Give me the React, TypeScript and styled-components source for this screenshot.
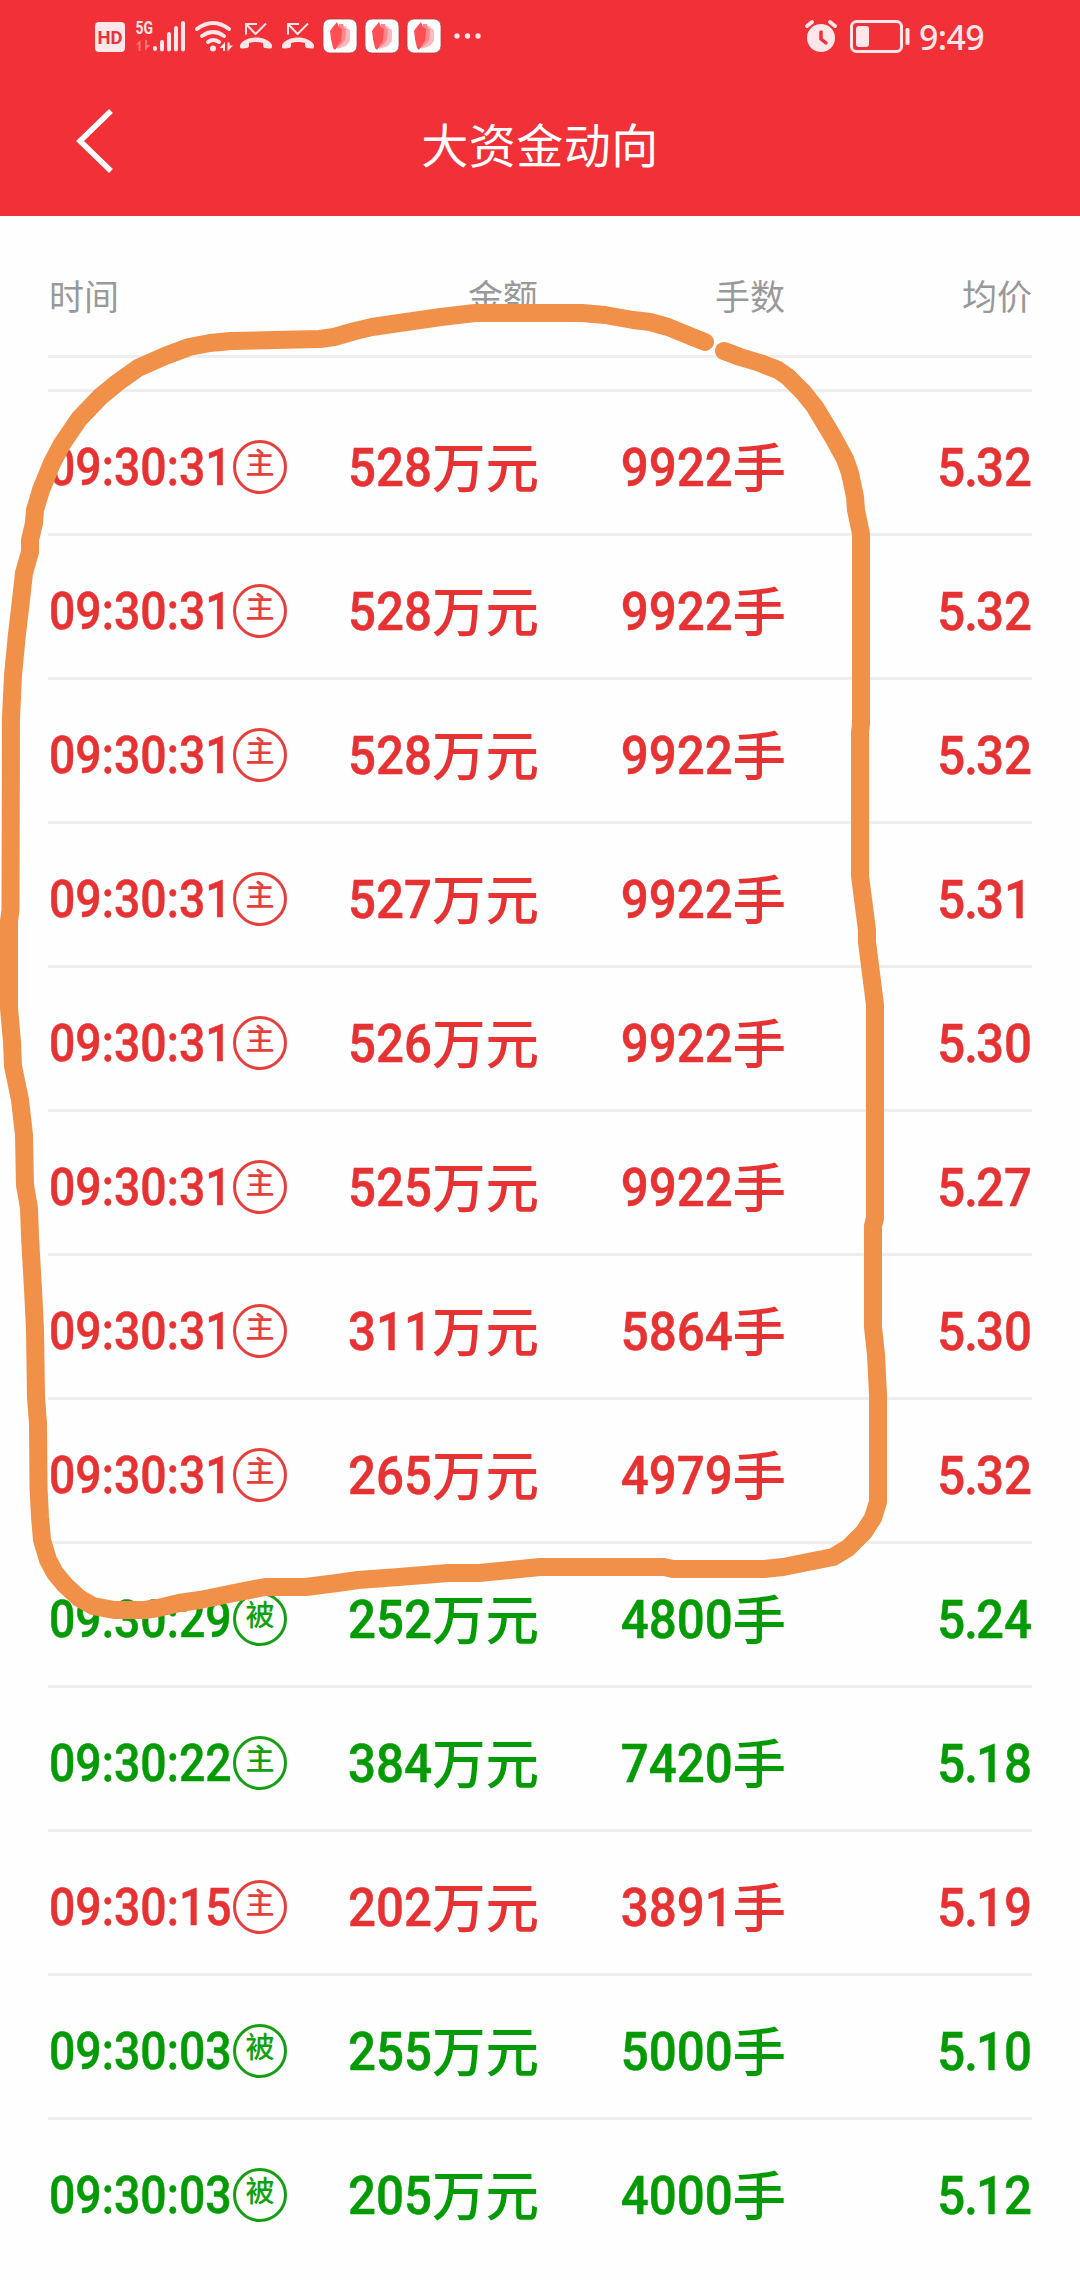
import React from "react";
import styled, { createGlobalStyle } from "styled-components";

const GlobalStyle = createGlobalStyle`
  * { box-sizing: border-box; }
  body { margin: 0; background: #fff; }
`;

const RED = "#e63232";
const GREEN = "#049a04";

const Screen = styled.div`
  position: relative;
  width: 1080px;
  height: 2280px;
  overflow: hidden;
  background: #fefefe;
  font-family: Roboto, "Noto Sans CJK SC", sans-serif;
`;

const TopBar = styled.header`
  height: 216px;
  background: #f23038;
`;

const StatusBar = styled.div`
  display: flex;
  justify-content: space-between;
  height: 72px;
  padding-right: 96px;
`;

const StatusClock = styled.div`
  display: flex;
  align-items: center;
`;

const ClockText = styled.span`
  width: 65px;
  margin-top: 1px;
  font-family: "Noto Sans", sans-serif;
  font-weight: 500;
  font-size: 34px;
  line-height: 72px;
  letter-spacing: -0.6px;
  color: #ffe6e8;
  white-space: nowrap;
`;

const TitleBar = styled.div`
  display: grid;
  grid-template-columns: 160px 1fr 160px;
  align-items: center;
  height: 144px;
`;

const BackButton = styled.button`
  display: flex;
  padding: 0 0 6px 70px;
  border: 0;
  background: none;
`;

const Title = styled.h1`
  margin: 0;
  padding-top: 5px;
  text-align: center;
  font-weight: 400;
  font-size: 47px;
  line-height: 139px;
  letter-spacing: 0.5px;
  color: #fff;
`;

const Table = styled.main`
  padding: 0 48px;
`;

const columns = `
  display: grid;
  grid-template-columns: 260px 230px 247px 247px;
  align-items: center;
`;

const HeadRow = styled.div`
  ${columns}
  height: 142px;
  padding-bottom: 17px;
  margin-bottom: 31px;
  border-bottom: 3px solid #eee;
  font-size: 35px;
  color: #999;
`;

const HeadCell = styled.span<{ $left?: boolean }>`
  padding-top: 34px;
  padding-left: ${(p) => (p.$left ? 1 : 0)}px;
  text-align: ${(p) => (p.$left ? "left" : "right")};
`;

const Rows = styled.div`
  border-top: 3px solid #eee;
`;

const Row = styled.div<{ $color: string }>`
  ${columns}
  height: 144px;
  padding-top: 10px;
  border-bottom: 3px solid #eee;
  font-size: 54px;
  font-weight: 500;
  line-height: 70px;
  color: ${(p) => p.$color};

  &:last-child {
    border-bottom-color: transparent;
  }
`;

const TimeCell = styled.div`
  display: flex;
  align-items: center;
`;

const Time = styled.span`
  width: 184.5px;
  margin: 1px 0 0 0.5px;
  font-size: 52px;
  white-space: nowrap;
  -webkit-text-stroke: 0.5px currentColor;
  transform: scaleX(0.892);
  transform-origin: left;
`;

const Badge = styled.span`
  display: flex;
  justify-content: center;
  width: 54px;
  height: 54px;
  margin-top: -1px;
  border: 3px solid currentColor;
  border-radius: 50%;
  font-size: 29px;
  font-weight: 500;
  line-height: 43px;
  opacity: 0.94;
`;

const Value = styled.div`
  display: flex;
  justify-content: flex-end;
  white-space: nowrap;
`;

const Digits = styled.span`
  -webkit-text-stroke: 0.5px currentColor;
  transform: scaleX(0.912);
  transform-origin: right;
`;

const Point = styled.span`
  margin: 0 -2px 0 -1px;
`;

const Unit = styled.span`
  margin: 2px -1px -2px 0;
  font-size: 53.500px;
`;

const StrokeLayer = styled.svg`
  position: absolute;
  inset: 0;
  pointer-events: none;
`;

const LeafTile = ({ x }: { x: number }) => (
  <g transform={`translate(${x} 19)`}>
    <rect width="34" height="34" rx="7" fill="#fff" stroke="#a8434a" strokeWidth="0.8" />
    <path d="M18 7h5l1 2 3 2v11l-4 5-9 3z" fill="#ffb9bc" />
    <path d="M16 5h4l1 4 2 1-1 11-4 5-6 4z" fill="#ff878c" />
    <path d="M14 3l2 5 3 2-1 12-3 4-3 5-2-2-2-9-1-8 2-3z" fill="#ff4f55" />
  </g>
);

const MissedCall = ({ x }: { x: number }) => (
  <g transform={`translate(${x} 0)`}>
    <path d="M6 34.500V24h11M6 24l9.500 10L26 23.500" fill="none" stroke="#ffe6e8" strokeWidth="2" />
    <path d="M0 45c5-10 27-10 32 0v2q0 2-3 1.500l-4-.5q-2 0-2-3v-2q-7-2-14 0v2q0 3-2 3l-4 .5q-3 .5-3-1.500z" fill="#ffe6e8" />
  </g>
);

const StatusIcons = () => (
  <svg width="500" height="72" fill="#ffe6e8">
    <rect x="95" y="22" width="30" height="30" rx="4" />
    <text x="110" y="43.500" textAnchor="middle" fontSize="19" fontWeight="700" fill="#e3343c" fontFamily="Roboto" textLength="25" lengthAdjust="spacingAndGlyphs">HD</text>
    <text x="135.500" y="34" fontSize="19" fontWeight="700" fontFamily="Roboto" textLength="17.500" lengthAdjust="spacingAndGlyphs">5G</text>
    <path d="M135.500 45l5-5v11h-2v-7zM150 45l-5 6V40h2v5z" fill="#f7767c" />
    <g stroke="#ffe6e8" strokeWidth="4" strokeLinecap="round">
      <path d="M155 48v1M162 42v7.500M169 34v15.500M176 28v21.500M183 23v26.500" />
    </g>
    <g stroke="#ffe6e8" strokeWidth="4" fill="none" strokeLinecap="round">
      <path d="M197 29q16-12 32 0M202 36q11-8 22 0M208 42q5-4 11 0" />
    </g>
    <circle cx="213" cy="48.500" r="3" />
    <path d="M219.500 48l5.500-6v9h-2v-3zM233 45.500l-5.500 6v-9h2v3z" />
    <MissedCall x={240} />
    <MissedCall x={282} />
    <LeafTile x={323} />
    <LeafTile x={365} />
    <LeafTile x={407} />
    <circle cx="457" cy="36" r="2.700" />
    <circle cx="467.500" cy="36" r="2.700" />
    <circle cx="478" cy="36" r="2.700" />
  </svg>
);

const AlarmBattery = () => (
  <svg width="115" height="72" fill="#ffe6e8">
    <circle cx="17" cy="38" r="14" />
    <path d="M3 26l5-4M31 26l-5-4" stroke="#ffe6e8" strokeWidth="4" strokeLinecap="round" />
    <path d="M17 32v7l5 4" fill="none" stroke="#f23038" strokeWidth="3.500" strokeLinecap="round" />
    <rect x="47.500" y="21.500" width="50" height="30" rx="5" fill="none" stroke="#ffe6e8" strokeWidth="3" />
    <rect x="52" y="26" width="13" height="21" rx="3" />
    <rect x="101.500" y="28" width="4" height="17" rx="1.500" />
  </svg>
);

const LOOP_POINTS =
  "705,342 690,336 668,327 650,322 633,320 605,315 582,313 560,313 475,313 441,317 406,322 372,327 355,331 334,337 320,339 275,340 231,341 210,343 189,347 165,356 138,368 117,383 100,397 79,419 62,444 52,463 41,490 35,510 34,523 30,540 30,552 24,573 21,600 17,634 13,675 11,718 10.500,910 9,921 9,1008 12,1042 13,1066 20,1100 24,1135 25,1185 29,1208 30,1237 33,1289 35,1329 36,1398 38,1423 38.500,1487 40,1517 42,1540 48,1560 55,1573 65,1585 79,1598 93,1606 114,1610 145,1610 158,1608 179,1603 200,1600 234,1593 265,1587 306,1587 337,1583 358,1580 399,1577 448,1573 479,1573 510,1570 540,1567 664,1567 673,1569 764,1569 783,1567 833,1557 848,1548 864,1532 873,1518 878,1502 878,1395 876,1355 873,1327 873,1226 875,1218 875,1005 867,942 867,930 860,876 860,732 861,724 861,534 856,510 855,497 850,473 845,459 833,437 815,407 803,392 788,377 778,370 760,363 740,357 724,351";

interface Deal {
  time: string;
  kind: "主" | "被";
  amount: string;
  lots: string;
  price: string;
  down?: boolean;
}

const deals: Deal[] = [
  { time: "09:30:31", kind: "主", amount: "528", lots: "9922", price: "5.32" },
  { time: "09:30:31", kind: "主", amount: "528", lots: "9922", price: "5.32" },
  { time: "09:30:31", kind: "主", amount: "528", lots: "9922", price: "5.32" },
  { time: "09:30:31", kind: "主", amount: "527", lots: "9922", price: "5.31" },
  { time: "09:30:31", kind: "主", amount: "526", lots: "9922", price: "5.30" },
  { time: "09:30:31", kind: "主", amount: "525", lots: "9922", price: "5.27" },
  { time: "09:30:31", kind: "主", amount: "311", lots: "5864", price: "5.30" },
  { time: "09:30:31", kind: "主", amount: "265", lots: "4979", price: "5.32" },
  { time: "09:30:29", kind: "被", amount: "252", lots: "4800", price: "5.24", down: true },
  { time: "09:30:22", kind: "主", amount: "384", lots: "7420", price: "5.18", down: true },
  { time: "09:30:15", kind: "主", amount: "202", lots: "3891", price: "5.19" },
  { time: "09:30:03", kind: "被", amount: "255", lots: "5000", price: "5.10", down: true },
  { time: "09:30:03", kind: "被", amount: "205", lots: "4000", price: "5.12", down: true },
];

const Price = ({ value }: { value: string }) => {
  const [whole, cents] = value.split(".");
  return (
    <Digits>
      {whole}
      <Point>.</Point>
      {cents}
    </Digits>
  );
};

export default function App() {
  return (
    <Screen>
      <GlobalStyle />
      <TopBar>
        <StatusBar>
          <StatusIcons />
          <StatusClock>
            <AlarmBattery />
            <ClockText>9:49</ClockText>
          </StatusClock>
        </StatusBar>
        <TitleBar>
          <BackButton aria-label="返回">
            <svg width="50" height="68" fill="none" stroke="#fff" strokeWidth="5.500">
              <path d="M41 4L10 34l31 30" />
            </svg>
          </BackButton>
          <Title>大资金动向</Title>
        </TitleBar>
      </TopBar>
      <Table>
        <HeadRow>
          <HeadCell $left>时间</HeadCell>
          <HeadCell>金额</HeadCell>
          <HeadCell>手数</HeadCell>
          <HeadCell>均价</HeadCell>
        </HeadRow>
        <Rows>
          {deals.map((d, i) => (
            <Row key={i} $color={d.down ? GREEN : RED}>
              <TimeCell>
                <Time>{d.time}</Time>
                <Badge>{d.kind}</Badge>
              </TimeCell>
              <Value>
                <Digits>{d.amount}</Digits>
                <Unit>万元</Unit>
              </Value>
              <Value>
                <Digits>{d.lots}</Digits>
                <Unit>手</Unit>
              </Value>
              <Value>
                <Price value={d.price} />
              </Value>
            </Row>
          ))}
        </Rows>
      </Table>
      <StrokeLayer width="1080" height="2280" fill="none" stroke="#f19149" strokeWidth="18" strokeLinecap="round" strokeLinejoin="round">
        <polyline points={LOOP_POINTS} />
      </StrokeLayer>
    </Screen>
  );
}
